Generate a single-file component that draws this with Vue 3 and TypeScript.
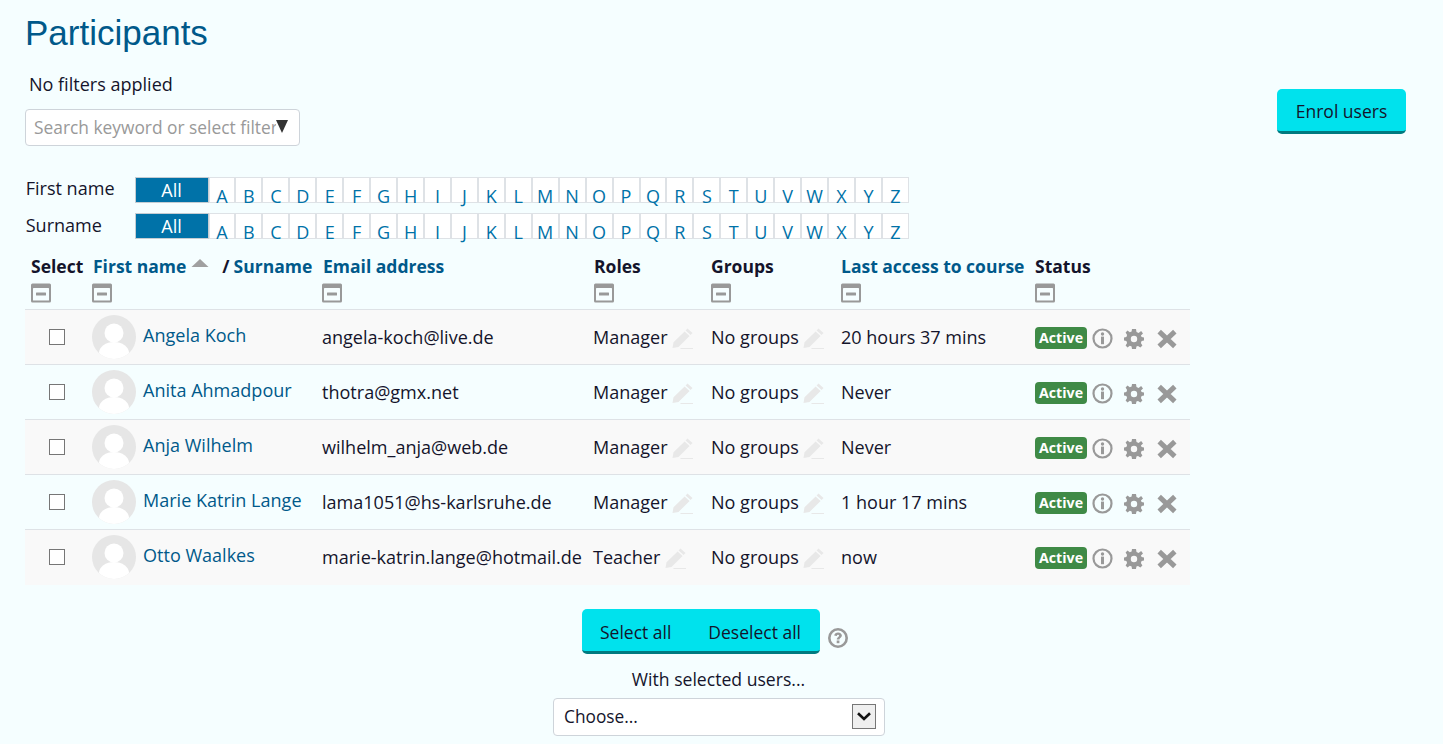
<script setup lang="ts">
const letters: string[] = 'ABCDEFGHIJKLMNOPQRSTUVWXYZ'.split('')
const bars = ['First name', 'Surname']
interface Row { name: string; email: string; role: string; access: string }
const rows: Row[] = [
  { name: 'Angela Koch', email: 'angela-koch@live.de', role: 'Manager', access: '20 hours 37 mins' },
  { name: 'Anita Ahmadpour', email: 'thotra@gmx.net', role: 'Manager', access: 'Never' },
  { name: 'Anja Wilhelm', email: 'wilhelm_anja@web.de', role: 'Manager', access: 'Never' },
  { name: 'Marie Katrin Lange', email: 'lama1051@hs-karlsruhe.de', role: 'Manager', access: '1 hour 17 mins' },
  { name: 'Otto Waalkes', email: 'marie-katrin.lange@hotmail.de', role: 'Teacher', access: 'now' },
]
const headers = [
  { key: 'select', link: false },
  { key: 'name', link: true },
  { key: 'Email address', link: true },
  { key: 'Roles', link: false },
  { key: 'Groups', link: false },
  { key: 'Last access to course', link: true },
  { key: 'Status', link: false },
]
</script>

<template>
  <div class="page">
    <h1 class="title">Participants</h1>
    <div class="top">
      <div class="filters">
        <div class="nofilter">No filters applied</div>
        <div class="search">
          <span class="placeholder">Search keyword or select filter</span>
          <span class="arrow"></span>
        </div>
      </div>
      <button class="btn enrol">Enrol users</button>
    </div>

    <div class="bars">
      <div v-for="b in bars" :key="b" class="bar">
        <span class="barlabel">{{ b }}</span>
        <span class="cell all">All</span>
        <span v-for="l in letters" :key="l" class="cell letter">{{ l }}</span>
      </div>
    </div>

    <table class="table">
      <colgroup>
        <col class="c1" /><col class="c2" /><col class="c3" />
        <col class="c4" /><col class="c5" /><col class="c6" /><col class="c7" />
      </colgroup>
      <thead>
        <tr>
          <th v-for="h in headers" :key="h.key">
            <div class="thtext">
              <template v-if="h.key === 'select'">Select</template>
              <template v-else-if="h.key === 'name'">
                <a>First name</a>
                <svg class="sort" width="18" height="10" viewBox="0 0 18 10"><path d="M9 1 L17.5 9 H0.5 Z" fill="#a0a0a0" /></svg>
                <span class="slash">/</span><a>Surname</a>
              </template>
              <a v-else-if="h.link">{{ h.key }}</a>
              <template v-else>{{ h.key }}</template>
            </div>
            <svg class="collapse" width="20" height="20" viewBox="0 0 20 20">
              <rect x="0" y="0.5" width="20" height="19" rx="1.5" fill="#999" />
              <rect x="2" y="5" width="16" height="12.5" rx="0.5" fill="#f6feff" />
              <rect x="5" y="9.5" width="10" height="3" rx="0.5" fill="#999" />
            </svg>
          </th>
        </tr>
      </thead>
      <tbody>
        <tr v-for="r in rows" :key="r.name">
          <td><span class="check"></span></td>
          <td>
            <div class="user">
              <svg class="avatar" width="44" height="44" viewBox="0 0 44 44">
                <defs><clipPath id="avc"><circle cx="22" cy="22" r="22" /></clipPath></defs>
                <circle cx="22" cy="22" r="22" fill="#e6e6e6" />
                <g clip-path="url(#avc)">
                  <circle cx="22" cy="18" r="9.5" fill="#fff" />
                  <ellipse cx="22" cy="38" rx="15" ry="11" fill="#fff" />
                </g>
              </svg>
              <a class="uname">{{ r.name }}</a>
            </div>
          </td>
          <td>{{ r.email }}</td>
          <td>
            <span class="edit role">{{ r.role }}
              <svg class="pen" width="21" height="21" viewBox="0 0 21 21"><path d="M15.5 0.5 L20.5 5 L18.6 7 L13.6 2.5 Z M12.6 3.6 L17.6 8 L6.5 19 L0.5 20 L1.5 14.2 Z M9 20 H21 V21 H8 Z" fill="#e8e8e8" /></svg>
            </span>
          </td>
          <td>
            <span class="edit">No groups
              <svg class="pen" width="21" height="21" viewBox="0 0 21 21"><path d="M15.5 0.5 L20.5 5 L18.6 7 L13.6 2.5 Z M12.6 3.6 L17.6 8 L6.5 19 L0.5 20 L1.5 14.2 Z M9 20 H21 V21 H8 Z" fill="#e8e8e8" /></svg>
            </span>
          </td>
          <td>{{ r.access }}</td>
          <td>
            <div class="status">
              <span class="badge">Active</span>
              <svg class="ic-info" width="21" height="21" viewBox="0 0 21 21">
                <circle cx="10.5" cy="10.5" r="9" fill="none" stroke="#999" stroke-width="2.2" />
                <circle cx="10.5" cy="6" r="1.7" fill="#999" />
                <rect x="9" y="8.6" width="3" height="7.6" fill="#999" />
              </svg>
              <svg class="ic-gear" width="20" height="20" viewBox="0 0 20 20">
                <path fill="#999" fill-rule="evenodd" d="M8 0 H12 L12.5 3 L14.6 3.9 L17.1 2.1 L17.9 2.9 L19 4.4 L16.9 6.6 L17.6 8 L20 8.4 V11.6 L17.6 12 L16.9 14 L18.4 16.5 L16.4 18.4 L14 16.9 L12.4 17.5 L12 20 H8 L7.6 17.5 L5.8 16.8 L3.5 18.4 L1.6 16.4 L3.1 14 L2.4 12 L0 11.6 V8.4 L2.4 8 L3.1 6 L1.6 3.6 L3.5 1.6 L5.8 3.2 L7.6 2.5 Z M10 6.8 A3.2 3.2 0 1 0 10 13.2 A3.2 3.2 0 1 0 10 6.8 Z" />
              </svg>
              <svg class="ic-x" width="20" height="20" viewBox="0 0 20 20">
                <path d="M2.2 2.6 L17.8 17.4 M17.8 2.6 L2.2 17.4" stroke="#999" stroke-width="5" fill="none" />
              </svg>
            </div>
          </td>
        </tr>
      </tbody>
    </table>

    <div class="bottom">
      <div class="selectrow">
        <div class="btn group"><span>Select all</span><span>Deselect all</span></div>
        <svg class="help" width="20" height="20" viewBox="0 0 20 20">
          <circle cx="10" cy="10" r="8.7" fill="none" stroke="#999" stroke-width="2.6" />
          <path d="M6.2 7.6 C6.4 5.2 8.2 4.4 10 4.4 C12.4 4.4 13.9 5.8 13.9 7.5 C13.9 9.6 11.4 9.9 11.4 11.6 H8.8 C8.8 9.1 11.1 8.9 11.1 7.7 C11.1 7.1 10.7 6.8 10 6.8 C9.3 6.8 8.9 7.2 8.8 8 Z" fill="#999" />
          <rect x="8.7" y="12.5" width="2.7" height="2.7" fill="#999" />
        </svg>
      </div>
      <div class="withsel">With selected users...</div>
      <div class="choose">
        <span>Choose...</span>
        <span class="dd">
          <svg width="14" height="9" viewBox="0 0 14 9"><path d="M1 1.2 L7 7 L13 1.2" fill="none" stroke="#111" stroke-width="2.6" /></svg>
        </span>
      </div>
    </div>
  </div>
</template>

<style>
html, body { margin: 0; background: #f5feff; }
</style>

<style scoped>
.page {
  height: 744px;
  overflow: hidden;
  box-sizing: border-box;
  padding: 15px 37px 0 25px;
  background: #f5feff;
  font-family: "Open Sans", sans-serif;
  font-size: 18.05px;
  line-height: 24px;
  color: #14142b;
}
.title {
  margin: 0;
  font-family: "Liberation Sans", Arial, sans-serif;
  font-weight: 400;
  font-size: 35px;
  line-height: 35px;
  color: #00598a;
}
.top { display: flex; justify-content: space-between; margin-top: 22px; height: 89px; }
.nofilter { margin-left: 4px; height: 24px; }
.search {
  margin-top: 13px;
  width: 275px;
  height: 37px;
  box-sizing: border-box;
  border: 1px solid #ced4da;
  border-radius: 4px;
  background: #fff;
  display: flex;
  align-items: center;
  padding-left: 8px;
  padding-bottom: 2px;
  font-size: 17.35px;
}
.placeholder { color: #999; white-space: nowrap; width: 242px; overflow: hidden; flex: none; }
.arrow {
  flex: none;
  width: 0; height: 0;
  border-left: 6px solid transparent;
  border-right: 6px solid transparent;
  border-top: 13px solid #333;
}
.btn {
  border: 0;
  border-bottom: 3px solid #007a80;
  border-radius: 5px;
  background: #00e2ed;
  color: #14142b;
  font: inherit;
  font-size: 17.5px;
  padding: 0;
}
.enrol { width: 129px; height: 45px; margin-top: 17px; padding-top: 1px; line-height: 42px; }
.bars { margin-top: 16px; display: flex; flex-direction: column; gap: 10px; }
.bar { display: flex; height: 26px; }
.bar + .bar .barlabel { padding-top: 1px; }
.barlabel { box-sizing: border-box; width: 109.5px; padding-left: 0.7px; flex: none; line-height: 22px; }
.cell {
  box-sizing: border-box;
  height: 26px;
  flex: none;
  width: 26.95px;
  border: 1px solid #dee2e6;
  text-align: center;
  color: #0072a8;
}
.all {
  width: 74px;
  background: #0072a8;
  color: #fff;
  line-height: 25px;
  border-color: #c4ccd2;
}
.letter {
  background: #fff;
  line-height: 36px;
  white-space: nowrap;
}
.table {
  table-layout: fixed;
  width: 1165px;
  margin-top: 9px;
  border-collapse: collapse;
}
.c1 { width: 61px; }
.c2 { width: 230px; }
.c3 { width: 272px; }
.c4 { width: 117px; }
.c5 { width: 130px; }
.c6 { width: 194px; }
.c7 { width: 161px; }
th {
  text-align: left;
  font-weight: 700;
  padding: 6px 0 6px 6px;
  height: 61px;
  box-sizing: border-box;
  vertical-align: top;
  white-space: nowrap;
  font-size: 17.5px;
}
.thtext { height: 29px; line-height: 24px; display: flex; align-items: flex-start; }
th:nth-child(2) .thtext, th:nth-child(3) .thtext { padding-left: 1px; }
th a { color: #00598a; }
.sort { margin: 4px 0 0 5px; }
.slash { margin: 0 4px 0 13px; }
.collapse { display: block; }
td {
  height: 55px;
  padding: 0 0 0 6px;
  box-sizing: border-box;
  border-top: 1px solid #dee2e6;
  vertical-align: middle;
  white-space: nowrap;
}
tbody tr:nth-child(odd) td { background: #f9f9f9; }
tbody tr:nth-child(even) td { background: #f5feff; }
.check {
  display: block;
  width: 16px; height: 16px;
  box-sizing: border-box;
  border: 1px solid #767676;
  background: #fff;
  margin-left: 18px;
}
.user { display: flex; align-items: center; }
.avatar { flex: none; }
.uname { margin-left: 7px; color: #00598a; margin-top: -4px; }
.edit { display: inline-flex; align-items: center; }
.role { margin-left: -1px; }
.pen { margin-left: 4.5px; margin-top: 2px; }
.status { display: flex; align-items: center; margin-top: 2px; }
.badge {
  background: #3f8a46;
  color: #fff;
  border-radius: 4px;
  font-weight: 700;
  font-size: 14.2px;
  line-height: 22px;
  height: 22px;
  width: 52px;
  text-align: center;
}
.ic-info { margin-left: 5px; margin-top: 1px; }
.ic-gear { margin-left: 11px; margin-top: 1px; }
.ic-x { margin-left: 13px; margin-top: 2px; }
.bottom { margin-top: 24px; display: flex; flex-direction: column; align-items: center; width: 1380px; }
.selectrow { display: flex; align-items: flex-start; }
.group {
  display: flex;
  width: 238px;
  height: 45px;
  box-sizing: border-box;
  justify-content: space-between;
  padding: 0 19px 0 18px;
  line-height: 47px;
}
.help { margin: 19px 0 0 8px; }
.withsel { margin-top: 13px; height: 24px; margin-left: 7px; width: 180px; font-size: 17.6px; text-align: center; white-space: nowrap; }
.choose {
  margin-top: 7px;
  margin-left: 8px;
  width: 332px;
  height: 38px;
  box-sizing: border-box;
  border: 1px solid #ced4da;
  border-radius: 4px;
  background: #fff;
  display: flex;
  align-items: center;
  justify-content: space-between;
  padding: 0 8px 0 10px;
  font-size: 17.3px;
}
.dd {
  box-sizing: border-box;
  width: 24px; height: 25px;
  border: 1px solid #767676;
  background: #efefef;
  display: flex;
  align-items: center;
  justify-content: center;
}
</style>
